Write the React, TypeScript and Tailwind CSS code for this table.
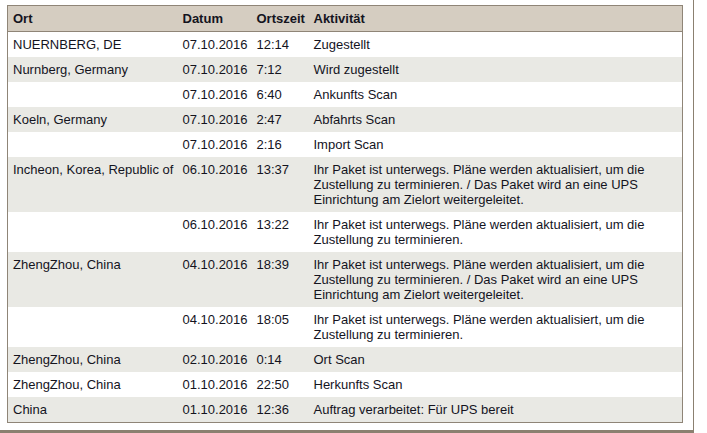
type Row = { ort: string; datum: string; zeit: string; aktivitaet: string };

const rows: Row[] = [
  { ort: 'NUERNBERG, DE', datum: '07.10.2016', zeit: '12:14', aktivitaet: 'Zugestellt' },
  { ort: 'Nurnberg, Germany', datum: '07.10.2016', zeit: '7:12', aktivitaet: 'Wird zugestellt' },
  { ort: '', datum: '07.10.2016', zeit: '6:40', aktivitaet: 'Ankunfts Scan' },
  { ort: 'Koeln, Germany', datum: '07.10.2016', zeit: '2:47', aktivitaet: 'Abfahrts Scan' },
  { ort: '', datum: '07.10.2016', zeit: '2:16', aktivitaet: 'Import Scan' },
  {
    ort: 'Incheon, Korea, Republic of',
    datum: '06.10.2016',
    zeit: '13:37',
    aktivitaet:
      'Ihr Paket ist unterwegs. Pläne werden aktualisiert, um die Zustellung zu terminieren. / Das Paket wird an eine UPS Einrichtung am Zielort weitergeleitet.',
  },
  {
    ort: '',
    datum: '06.10.2016',
    zeit: '13:22',
    aktivitaet: 'Ihr Paket ist unterwegs. Pläne werden aktualisiert, um die Zustellung zu terminieren.',
  },
  {
    ort: 'ZhengZhou, China',
    datum: '04.10.2016',
    zeit: '18:39',
    aktivitaet:
      'Ihr Paket ist unterwegs. Pläne werden aktualisiert, um die Zustellung zu terminieren. / Das Paket wird an eine UPS Einrichtung am Zielort weitergeleitet.',
  },
  {
    ort: '',
    datum: '04.10.2016',
    zeit: '18:05',
    aktivitaet: 'Ihr Paket ist unterwegs. Pläne werden aktualisiert, um die Zustellung zu terminieren.',
  },
  { ort: 'ZhengZhou, China', datum: '02.10.2016', zeit: '0:14', aktivitaet: 'Ort Scan' },
  { ort: 'ZhengZhou, China', datum: '01.10.2016', zeit: '22:50', aktivitaet: 'Herkunfts Scan' },
  { ort: 'China', datum: '01.10.2016', zeit: '12:36', aktivitaet: 'Auftrag verarbeitet: Für UPS bereit' },
];

export default function App() {
  return (
    <div className="w-[707px] h-[433px] bg-white overflow-hidden font-['Liberation_Sans',Arial,sans-serif] text-[13px] leading-[15px] text-[#14141e]">
      {/* outer panel */}
      <div className="w-[694px] h-[433px] border-r border-b-[3px] border-[#8b8070] pl-[7px] pt-[5px]">
        <table className="w-[676px] table-fixed border-collapse border border-[#8f8577]">
          <colgroup>
            <col className="w-[170px]" />
            <col className="w-[74px]" />
            <col className="w-[57px]" />
            <col />
          </colgroup>
          <thead>
            <tr className="bg-[#d5cdc1] border-b border-[#8f8577]">
              <th className="text-left font-bold pl-[5px] py-[5px]">Ort</th>
              <th className="text-left font-bold pl-[5px] py-[5px]">Datum</th>
              <th className="text-left font-bold pl-[5px] py-[5px]">Ortszeit</th>
              <th className="text-left font-bold pl-[5px] py-[5px]">Aktivität</th>
            </tr>
          </thead>
          <tbody>
            {rows.map((r, i) => (
              <tr key={i} className={i % 2 === 0 ? 'bg-white' : 'bg-[#e9e9e4]'}>
                <td className="align-top pl-[5px] py-[5px]">{r.ort}</td>
                <td className="align-top pl-[5px] py-[5px]">{r.datum}</td>
                <td className="align-top pl-[5px] py-[5px]">{r.zeit}</td>
                <td className="align-top pl-[5px] pr-[10px] py-[5px]">{r.aktivitaet}</td>
              </tr>
            ))}
          </tbody>
        </table>
      </div>
    </div>
  );
}
